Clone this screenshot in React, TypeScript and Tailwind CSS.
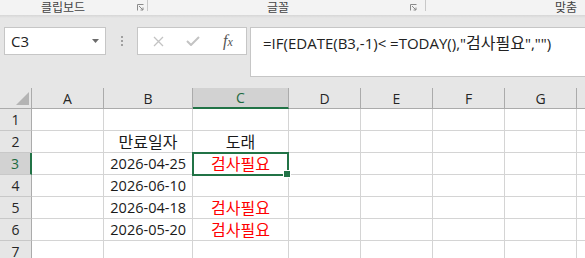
import React from "react";

const font = "font-['Open_Sans','Noto_Sans_CJK_KR',sans-serif]";

const cols = [
  { key: "A", w: "w-[72px]" },
  { key: "B", w: "w-[89px]" },
  { key: "C", w: "w-[96px]" },
  { key: "D", w: "w-[72px]" },
  { key: "E", w: "w-[72px]" },
  { key: "F", w: "w-[72px]" },
  { key: "G", w: "w-[72px]" },
];

const rows: Record<string, { b?: string; c?: string; bCenter?: boolean; cRed?: boolean }> = {
  "1": {},
  "2": { b: "만료일자", c: "도래", bCenter: true },
  "3": { b: "2026-04-25", c: "검사필요", cRed: true },
  "4": { b: "2026-06-10" },
  "5": { b: "2026-04-18", c: "검사필요", cRed: true },
  "6": { b: "2026-05-20", c: "검사필요", cRed: true },
  "7": {},
};

function Launcher() {
  return (
    <svg width="7" height="7" viewBox="0 0 7 7" className="text-[#8a8a8a]">
      <path d="M0.5 6.5V0.5H6.5" fill="none" stroke="currentColor" strokeWidth="1" />
      <path d="M2 2L6 6M6 3.5V6H3.5" fill="none" stroke="currentColor" strokeWidth="1" />
    </svg>
  );
}

export default function App() {
  return (
    <div className={`w-[585px] h-[258px] overflow-hidden bg-[#e6e6e6] ${font} text-[#262626]`}>
      {/* ribbon group labels */}
      <div className="flex h-[15px] bg-[#f3f3f3] text-[12px] leading-[14px] text-[#444]">
        <div className="relative w-[148px] shrink-0">
          <span className="absolute left-[41px] top-[1px]">클립보드</span>
          <span className="absolute left-[137px] top-[4px] flex"><Launcher /></span>
          <span className="absolute right-0 top-0 h-[11px] w-px bg-[#c8c8c8]" />
        </div>
        <div className="relative w-[278px] shrink-0">
          <span className="absolute left-[119px] top-[1px]">글꼴</span>
          <span className="absolute left-[262px] top-[4px] flex"><Launcher /></span>
          <span className="absolute right-0 top-0 h-[11px] w-px bg-[#c8c8c8]" />
        </div>
        <div className="relative flex-1">
          <span className="absolute left-[129px] top-[1px] whitespace-nowrap">맞춤</span>
        </div>
      </div>
      <div className="h-[3px] bg-gradient-to-b from-[#d6d6d6] to-[#e6e6e6]" />

      {/* formula bar */}
      <div className="flex items-start pt-[9px] pl-[4px] h-[59px]">
        <div className="flex items-center justify-between w-[102px] h-[28px] bg-white border border-[#c6c6c6] pl-[6px] pr-[6px]">
          <span className="text-[15px] text-[#222]">C3</span>
          <svg width="7" height="4" viewBox="0 0 7 4"><path d="M0 0H7L3.5 4Z" fill="#6b6b6b" /></svg>
        </div>
        <div className="w-[31px] h-[28px] flex flex-col items-center justify-center gap-[2px]">
          <span className="w-[2px] h-[2px] bg-[#a0a0a0]" />
          <span className="w-[2px] h-[2px] bg-[#a0a0a0]" />
          <span className="w-[2px] h-[2px] bg-[#a0a0a0]" />
        </div>
        <div className="flex items-center w-[110px] h-[28px] bg-white border border-[#c6c6c6]">
          <div className="w-[37px] flex justify-center pl-[3px]">
            <svg width="11" height="11" viewBox="0 0 11 11"><path d="M1 1L10 10M10 1L1 10" stroke="#c3c3c3" strokeWidth="1.3" /></svg>
          </div>
          <div className="w-[35px] flex justify-center">
            <svg width="14" height="10" viewBox="0 0 14 10"><path d="M1 5L5 9L13 1" fill="none" stroke="#c3c3c3" strokeWidth="2" /></svg>
          </div>
          <div className="w-[36px] flex justify-center">
            <span className="font-['Liberation_Serif',serif] italic text-[16px] text-[#555] leading-none">
              f<span className="text-[12px]">x</span>
            </span>
          </div>
        </div>
        <div className="ml-[3px] flex-1 h-[50px] bg-white border border-[#c6c6c6] border-r-0 pl-[12px] pt-[3px] text-[15px] text-[#222] whitespace-nowrap">
          =IF(EDATE(B3,-1)&lt; =TODAY(),"<span className="text-[16px]">검사필요</span>","")
        </div>
      </div>

      {/* sheet */}
      <div className="relative mt-[11px]">
        <div className="flex h-[21px] border-b border-[#ababab] text-[14px]">
          <div className="w-[32px] border-r border-[#ababab] relative">
            <svg className="absolute left-[16px] top-[4px]" width="13" height="13" viewBox="0 0 13 13"><path d="M13 0V13H0Z" fill="#b4b4b4" /></svg>
          </div>
          {cols.map((c) => (
            <div
              key={c.key}
              className={`${c.w} shrink-0 flex items-center justify-center border-r border-[#ababab] ${
                c.key === "C" ? "bg-[#d2d2d2] border-b-2 border-b-[#217346] text-[#1d6a40] h-[21px]" : ""
              }`}
            >
              {c.key}
            </div>
          ))}
          <div className="flex-1" />
        </div>
        {Object.entries(rows).map(([n, r]) => (
          <div key={n} className="flex h-[22px] bg-white">
            <div
              className={`w-[32px] shrink-0 flex items-center justify-center text-[14px] border-b border-[#c8c8c8] ${
                n === "3" ? "bg-[#d2d2d2] border-r-2 border-r-[#217346] text-[#1d6a40]" : "bg-[#e6e6e6] border-r border-r-[#ababab]"
              }`}
            >
              {n}
            </div>
            {cols.map((c) => {
              let content: React.ReactNode = null;
              let align = "justify-center";
              let size = "text-[14.5px]";
              let color = "";
              if (c.key === "B" && r.b) {
                content = r.b;
                align = r.bCenter ? "justify-center" : "justify-end pr-[6px]";
                if (r.bCenter) size = "text-[16px]";
              }
              if (c.key === "C" && r.c) {
                content = r.c;
                size = "text-[16px]";
                color = r.cRed ? "text-[#ff0000]" : "";
              }
              return (
                <div
                  key={c.key}
                  className={`${c.w} shrink-0 flex items-center ${align} border-r border-b border-[#d4d4d4] ${size} text-[#1a1a1a] whitespace-nowrap`}
                >
                  <span className={color}>{content}</span>
                </div>
              );
            })}
            <div className="flex-1 border-b border-[#d4d4d4]" />
          </div>
        ))}
        {/* selected cell */}
        <div className="absolute left-[192px] top-[64px] w-[97px] h-[24px] border-2 border-[#217346]">
          <div className="absolute right-[-4px] bottom-[-4px] w-[6px] h-[6px] bg-[#217346] border border-white box-content" />
        </div>
      </div>
    </div>
  );
}
